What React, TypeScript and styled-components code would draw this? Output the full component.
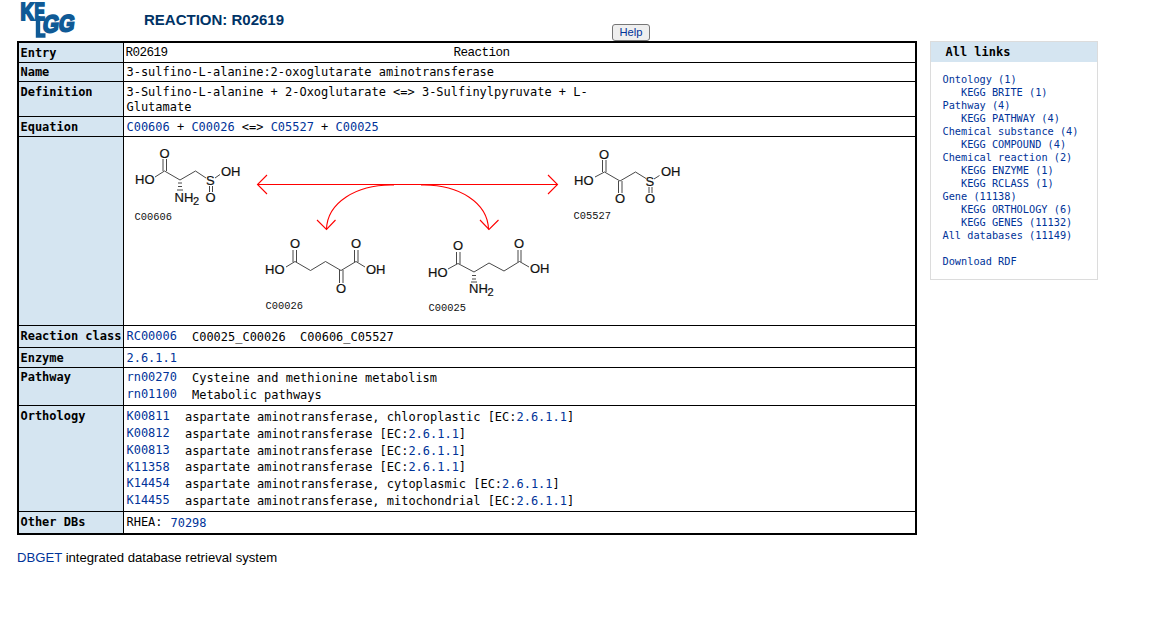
import React from "react";
import styled, { createGlobalStyle } from "styled-components";

const mono = `"DejaVu Sans Mono", monospace`;
const courier = `"Liberation Mono", monospace`;
const arial = `"Liberation Sans", sans-serif`;

const GlobalStyle = createGlobalStyle`
  * { box-sizing: border-box; }
  body { margin: 0; background: #fff; color: #000; }
`;

const Page = styled.div`
  width: 1161px;
  height: 643px;
  padding-left: 17px;
  font: 11.97px/15px ${mono};
`;

const Header = styled.header`
  display: flex;
  align-items: flex-start;
  height: 41px;
`;

const Logo = styled.svg`
  width: 64px;
  height: 41px;
  flex: none;
  overflow: visible;
`;

const Title = styled.h1`
  margin: 10px 0 0 63px;
  width: 468px;
  font: bold 15px/20px ${arial};
  color: #003366;
`;

const HelpButton = styled.button`
  margin: 24px 0 0;
  width: 38px;
  height: 17px;
  padding: 0 0 1px;
  border: 1px solid #767676;
  border-radius: 3px;
  background: #efefef;
  color: #003399;
  font: 11.2px/14px ${arial};
`;

const Columns = styled.div`
  display: flex;
  align-items: flex-start;
  gap: 13px;
`;

const Table = styled.div`
  width: 900px;
  border: 2px solid #000;
`;

const Row = styled.section<{ $h: number }>`
  display: grid;
  grid-template-columns: 105px 1fr;
  height: ${(p) => p.$h}px;
  border-bottom: 1px solid #000;
  &:last-child { border-bottom: 0; }
`;

const Label = styled.div<{ $top: number }>`
  padding: ${(p) => p.$top}px 0 0 1.5px;
  border-right: 1px solid #000;
  background: #d5e5f1;
  font-weight: bold;
  white-space: nowrap;
`;

const Value = styled.div<{ $top: number }>`
  padding: ${(p) => p.$top}px 0 0 2.5px;
  white-space: pre;
`;

const Entry = styled(Value)`
  display: flex;
  padding-left: 1.5px;
  font: 12.6px/15px ${courier};
  letter-spacing: -0.56px;
`;

const EntryId = styled.span`
  width: 328px;
`;

const Definition = styled(Value)`
  width: 490px;
  white-space: normal;
`;

const Line = styled.div<{ $id: number; $h?: number; $drop?: number }>`
  display: grid;
  grid-template-columns: ${(p) => p.$id}px 1fr;
  height: ${(p) => p.$h ?? 17}px;
  & > :last-child { padding-top: ${(p) => p.$drop ?? 1}px; }
`;

const Link = styled.a`
  color: #003399;
`;

const Diagram = styled.svg`
  display: block;
`;

const Side = styled.aside`
  width: 168px;
  height: 239px;
  border: 1px solid #dcdcdc;
  color: #003399;
  font: 10.28px/13px ${mono};
`;

const SideTitle = styled.h2`
  margin: 0;
  height: 20px;
  padding: 3px 0 0 14.5px;
  background: #d5e5f1;
  color: #000;
  font: bold 11.97px/15px ${mono};
`;

const SideList = styled.div`
  padding: 11px 0 0 11.5px;
`;

const SideItem = styled.a<{ $sub?: boolean }>`
  display: block;
  height: 13px;
  padding-left: ${(p) => (p.$sub ? 18.5 : 0)}px;
  white-space: pre;
`;

const Footer = styled.footer`
  margin-top: 15px;
  font: 13.13px/16px ${arial};
`;

const orthology: [string, string, number, number][] = [
  ["K00811", ", chloroplastic", 17, 1],
  ["K00812", "", 17, 1],
  ["K00813", "", 17, 1],
  ["K11358", "", 16, 0],
  ["K14454", ", cytoplasmic", 17, 1],
  ["K14455", ", mitochondrial", 17, 1],
];

const links: [string, boolean][] = [
  ["Ontology (1)", false],
  ["KEGG BRITE (1)", true],
  ["Pathway (4)", false],
  ["KEGG PATHWAY (4)", true],
  ["Chemical substance (4)", false],
  ["KEGG COMPOUND (4)", true],
  ["Chemical reaction (2)", false],
  ["KEGG ENZYME (1)", true],
  ["KEGG RCLASS (1)", true],
  ["Gene (11138)", false],
  ["KEGG ORTHOLOGY (6)", true],
  ["KEGG GENES (11132)", true],
  ["All databases (11149)", false],
  ["", false],
  ["Download RDF", false],
];

type Atom = [x: number, y: number, text: string];

const atoms: Atom[] = [
  [159.5, 158, "O"], [135, 184, "HO"], [221, 175.5, "OH"], [206, 185, "S"], [205.5, 202, "O"], [174.5, 202, "NH"],
  [599, 159, "O"], [574, 185, "HO"], [661, 176, "OH"], [645.5, 185.5, "S"], [615, 203, "O"], [645, 203, "O"],
  [290, 248, "O"], [265, 274, "HO"], [351, 248, "O"], [366, 274, "OH"], [336, 293, "O"],
  [453, 249.5, "O"], [428, 277, "HO"], [514, 248, "O"], [530, 273, "OH"], [469, 293, "NH"],
];

const captions: Atom[] = [
  [134.5, 220, "C00606"],
  [573.5, 219, "C05527"],
  [265.5, 309, "C00026"],
  [428.5, 310.5, "C00025"],
];

const bonds = [
  "M163 159V171 M166.5 159V171 M155 177L164.5 171L180 180L195.5 171L206 178 M215 178L220 174.5 M209.5 186V192 M212.5 186V192",
  "M178 183H182 M178 186.5H182 M177 190H183",
  "M602.5 160V172 M606 160V172 M595 177L604.5 172L620 181L635.5 172L646 178.5 M654 179L659.5 175.5 M618.5 181V193 M622 181V193 M649 187V193 M652 187V193",
  "M293 250V262 M296.5 250V262 M286 267L295 261.5L310.5 270.5L325.5 261.5L341 270.5L356 261.5L365 267 M354.5 250V262 M358 250V262 M339.5 270V283 M343 270V283",
  "M456.5 252V264 M460 252V264 M448 269L458 263.5L474 272L489 263L504 271L519.5 261.5L529 267 M518 250V262 M521 250V262",
  "M472 275.5H476 M472 279H476 M471 282H477",
];

const arrows = [
  "M257.5 184.5H557.5",
  "M267 175L257.5 184.5L267 194",
  "M548 175L557.5 184.5L548 194",
  "M394 185C356 184 327 203 326.5 229.5",
  "M421 185C459 184 488 203 488.5 229.5",
  "M317 220L326.5 229.5L335.5 220",
  "M480 220L489 229.5L498.5 220",
];

function ReactionDiagram() {
  return (
    <Diagram width="791" height="188" viewBox="124 137 791 188">
      <g stroke="#333" strokeWidth="0.9" fill="none">
        {bonds.map((d) => <path key={d} d={d} />)}
      </g>
      <g fontFamily="Liberation Sans" fontSize="13" fill="#111" stroke="#111" strokeWidth="0.2">
        {atoms.map(([x, y, t]) => <text key={`${x}-${y}`} x={x} y={y}>{t}</text>)}
        <text x="193" y="204.5" fontSize="11">2</text>
        <text x="487.5" y="295.5" fontSize="11">2</text>
      </g>
      <g fontFamily="Liberation Mono" fontSize="10.4" fill="#111">
        {captions.map(([x, y, t]) => <text key={t} x={x} y={y}>{t}</text>)}
      </g>
      <g stroke="#ff0000" strokeWidth="1.1" fill="none">
        {arrows.map((d) => <path key={d} d={d} />)}
      </g>
    </Diagram>
  );
}

function KeggLogo() {
  return (
    <Logo viewBox="17 0 64 41">
      <g fontFamily="Liberation Sans" fontWeight="bold" fill="#0f5a96" stroke="#0f5a96" strokeWidth="2">
        <text transform="translate(20.5 19.5) scale(.82 1)" fontSize="23">K</text>
        <text transform="translate(34.5 19.5) scale(.68 1)" fontSize="23">E</text>
        <path d="M38 16V35.5H45.5" strokeWidth="4.4" fill="none" />
        <text transform="translate(42 32.500) rotate(-2) skewX(-10) scale(.86 1)" fontSize="24">G</text>
        <text transform="translate(58 31.500) rotate(-2) skewX(-10) scale(.88 1)" fontSize="23">G</text>
      </g>
    </Logo>
  );
}

export default function App() {
  return (
    <Page>
      <GlobalStyle />
      <Header>
        <KeggLogo />
        <Title>REACTION: R02619</Title>
        <HelpButton>Help</HelpButton>
      </Header>
      <Columns>
        <Table>
          <Row $h={20}>
            <Label $top={3}>Entry</Label>
            <Entry $top={3}><EntryId>R02619</EntryId><span>Reaction</span></Entry>
          </Row>
          <Row $h={19}>
            <Label $top={2}>Name</Label>
            <Value $top={2}>3-sulfino-L-alanine:2-oxoglutarate aminotransferase</Value>
          </Row>
          <Row $h={35}>
            <Label $top={3}>Definition</Label>
            <Definition $top={3}>3-Sulfino-L-alanine + 2-Oxoglutarate &lt;=&gt; 3-Sulfinylpyruvate + L-<br />Glutamate</Definition>
          </Row>
          <Row $h={20}>
            <Label $top={3}>Equation</Label>
            <Value $top={3}><Link>C00606</Link> + <Link>C00026</Link> &lt;=&gt; <Link>C05527</Link> + <Link>C00025</Link></Value>
          </Row>
          <Row $h={189}>
            <Label $top={0} />
            <ReactionDiagram />
          </Row>
          <Row $h={22}>
            <Label $top={3}>Reaction class</Label>
            <Value $top={3}><Line $id={65.5}><Link>RC00006</Link><span>C00025_C00026  C00606_C05527</span></Line></Value>
          </Row>
          <Row $h={20}>
            <Label $top={3}>Enzyme</Label>
            <Value $top={3}><Link>2.6.1.1</Link></Value>
          </Row>
          <Row $h={38}>
            <Label $top={2}>Pathway</Label>
            <Value $top={2}>
              <Line $id={65.5}><Link>rn00270</Link><span>Cysteine and methionine metabolism</span></Line>
              <Line $id={65.5}><Link>rn01100</Link><span>Metabolic pathways</span></Line>
            </Value>
          </Row>
          <Row $h={106}>
            <Label $top={3}>Orthology</Label>
            <Value $top={3}>
              {orthology.map(([id, kind, h, drop]) => (
                <Line key={id} $id={58.5} $h={h} $drop={drop}>
                  <Link>{id}</Link>
                  <span>aspartate aminotransferase{kind} [EC:<Link>2.6.1.1</Link>]</span>
                </Line>
              ))}
            </Value>
          </Row>
          <Row $h={21}>
            <Label $top={3}>Other DBs</Label>
            <Value $top={3}><Line $id={44}><span>RHEA:</span><Link>70298</Link></Line></Value>
          </Row>
        </Table>
        <Side>
          <SideTitle>All links</SideTitle>
          <SideList>
            {links.map(([text, sub], i) => <SideItem key={i} $sub={sub}>{text}</SideItem>)}
          </SideList>
        </Side>
      </Columns>
      <Footer><Link>DBGET</Link> integrated database retrieval system</Footer>
    </Page>
  );
}
